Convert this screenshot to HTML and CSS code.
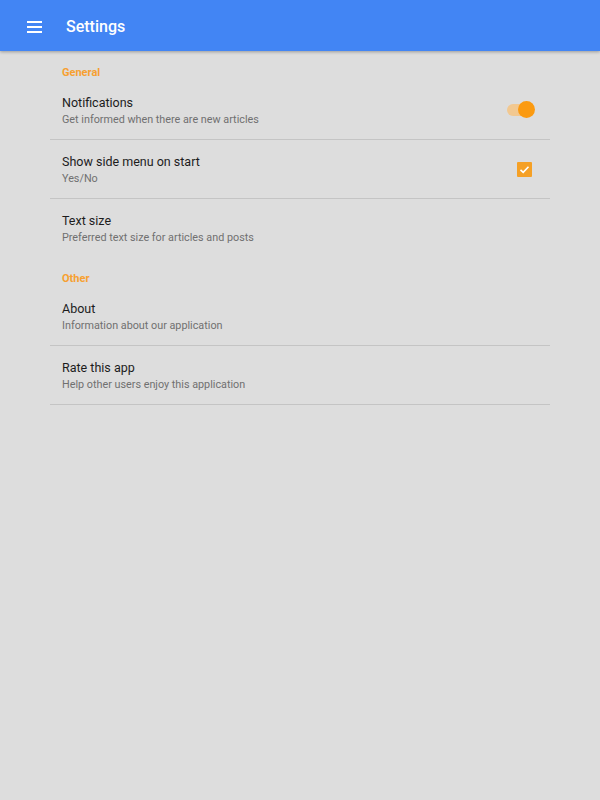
FILE: index.html
```html
<!DOCTYPE html>
<html>
<head>
<meta charset="utf-8">
<link rel="stylesheet" href="styles.css">
</head>
<body>
<header class="toolbar">
  <svg class="menu-icon" width="18" height="14" viewBox="0 0 18 14"><rect x="1" y="1" width="15" height="2" fill="#fff"/><rect x="1" y="6" width="15" height="2" fill="#fff"/><rect x="1" y="11" width="15" height="2" fill="#fff"/></svg>
  <h1 class="title">Settings</h1>
</header>
<main class="content">
  <div class="section-header">General</div>
  <div class="row">
    <div class="texts">
      <div class="row-title">Notifications</div>
      <div class="row-sub">Get informed when there are new articles</div>
    </div>
    <div class="toggle"><div class="track"></div><div class="knob"></div></div>
  </div>
  <div class="row">
    <div class="texts">
      <div class="row-title">Show side menu on start</div>
      <div class="row-sub">Yes/No</div>
    </div>
    <div class="checkbox"><svg width="15" height="15" viewBox="0 0 15 15"><path d="M3.5 7.8 L6.2 10.3 L11.5 4.8" fill="none" stroke="#fff" stroke-width="1.6"/></svg></div>
  </div>
  <div class="row last">
    <div class="texts">
      <div class="row-title">Text size</div>
      <div class="row-sub">Preferred text size for articles and posts</div>
    </div>
  </div>
  <div class="section-header">Other</div>
  <div class="row">
    <div class="texts">
      <div class="row-title">About</div>
      <div class="row-sub">Information about our application</div>
    </div>
  </div>
  <div class="row">
    <div class="texts">
      <div class="row-title">Rate this app</div>
      <div class="row-sub">Help other users enjoy this application</div>
    </div>
  </div>
</main>
</body>
</html>
```
FILE: styles.css
```css
html, body {
  margin: 0;
  padding: 0;
  height: 100%;
}
body {
  background: #dddddd;
  font-family: Roboto, "Liberation Sans", sans-serif;
}
.toolbar {
  height: 51px;
  box-sizing: border-box;
  padding-top: 2px;
  background: #4285f4;
  display: flex;
  align-items: center;
  box-shadow: 0 1px 3px rgba(0,0,0,0.3);
  position: relative;
}
.menu-icon {
  margin-left: 26px;
  display: block;
}
.title {
  margin: 0 0 0 22px;
  color: #fff;
  font-size: 16px;
  font-weight: 500;
}
.content {
  width: 500px;
  margin: 0 auto;
  padding-top: 1px;
}
.section-header {
  height: 29px;
  box-sizing: border-box;
  padding: 14px 12px 0;
  line-height: 14px;
  font-size: 11px;
  font-weight: 700;
  color: #f7a030;
}
.row {
  height: 58px;
  display: flex;
  align-items: center;
  padding: 0 12px;
  border-bottom: 1px solid #c4c4c4;
}
.row.last {
  border-bottom-color: transparent;
}
.texts {
  flex: 1;
  padding-top: 1px;
}
.row-title {
  font-size: 12.5px;
  line-height: 17px;
  color: #1c1c1c;
}
.row-sub {
  font-size: 10.8px;
  line-height: 17px;
  color: #707070;
}
.toggle {
  position: relative;
  width: 28px;
  height: 18px;
  margin-right: 3px;
}
.track {
  position: absolute;
  left: 0;
  top: 3px;
  width: 22px;
  height: 12px;
  border-radius: 6px;
  background: #f2c890;
}
.knob {
  position: absolute;
  right: 0;
  top: 0;
  width: 17px;
  height: 17px;
  border-radius: 50%;
  background: #fb9a10;
}
.checkbox {
  width: 15px;
  height: 15px;
  background: #f5a025;
  border-radius: 1px;
  margin-right: 6px;
}
.checkbox svg {
  display: block;
}
```
